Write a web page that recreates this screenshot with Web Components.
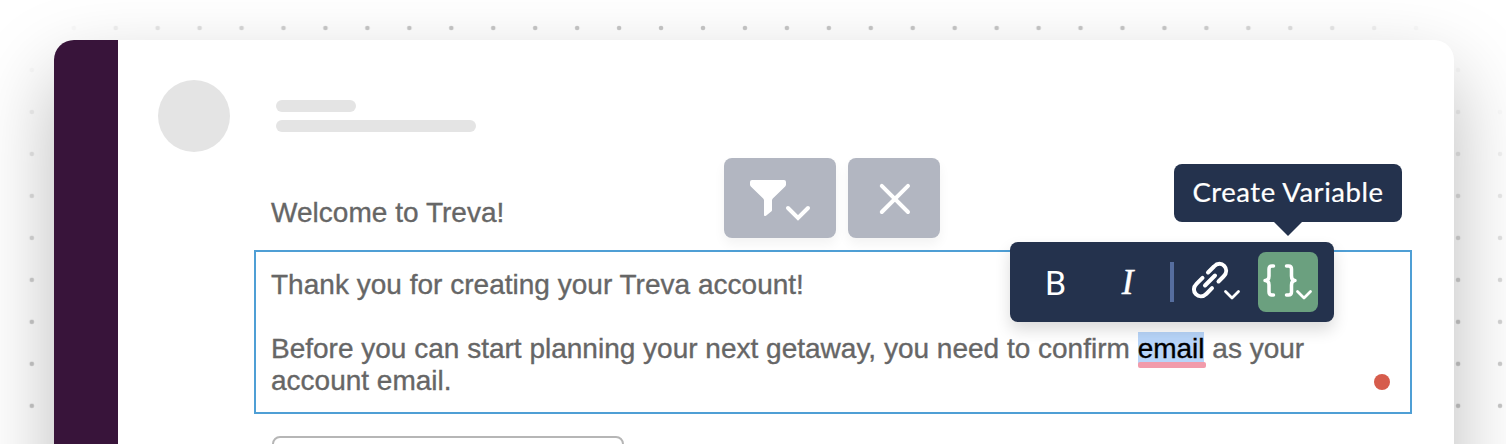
<!DOCTYPE html>
<html lang="en"><head><meta charset="utf-8"><title>Treva template editor</title>
<style>html,body{margin:0;height:444px;overflow:hidden;background:#fff}</style></head>
<body><template-editor></template-editor>
<script>
const define=(name,html)=>customElements.define(name,class extends HTMLElement{
 constructor(){super();const t=document.createElement('template');t.innerHTML=html;
 this.attachShadow({mode:'open'}).appendChild(t.content.cloneNode(true));}});

define('skeleton-header',`<style>
:host{display:flex;align-items:center;gap:46px;height:72px}
.avatar{width:72px;height:72px;border-radius:50%;background:#e4e4e4}
.lines{display:grid;gap:8px}
.lines i{display:block;height:12px;width:200px;border-radius:6px;background:#e4e4e4}
.lines i:first-child{width:80px}
</style><div class="avatar"></div><div class="lines"><i></i><i></i></div>`);

define('marked-word',`<style>
:host{position:relative;padding-top:1px;color:#000;background:linear-gradient(#b8d5f9,#b8d5f9) no-repeat 0 0/66px 100%}
:host::after{content:"";position:absolute;left:0;width:68px;top:30px;height:6px;border-radius:2px;background:#f29bab}
</style><slot></slot>`);

define('text-block',`<style>
:host{display:block;position:relative;box-sizing:border-box;height:164px;border:2px solid #4f9fd5;padding:17px 15px 15px}
.dot{position:absolute;right:20px;bottom:22px;width:16px;height:16px;border-radius:50%;background:#d65c4c}
</style><slot></slot><span class="dot"></span>`);

define('filter-actions',`<style>
:host{display:flex;gap:12px}
.b{box-sizing:border-box;height:80px;border-radius:8px;background:#b2b6c1;box-shadow:0 6px 12px rgba(0,0,0,.05)}
svg{display:block}
</style><div class="b"><svg width="112" height="80" viewBox="0 0 112 80"><path fill="#fff" d="M28 22h32q2 0 2 2v2.600q0 1-.8 1.800L48.800 40.500Q48 41.300 48 42.500V52q0 1-.8 1.600L42 57.700q-2 1-2-.7V42.500Q40 41.300 39.200 40.500L26.800 28.400Q26 27.600 26 26.600V24q0-2 2-2z"/><path d="M64 50l10 10 10-10" fill="none" stroke="#fff" stroke-width="4" stroke-linecap="round"/></svg></div>
<div class="b"><svg width="92" height="80" viewBox="0 0 92 80"><path d="M33.800 27.800L60 54M60 27.800L33.800 54" fill="none" stroke="#fff" stroke-width="4" stroke-linecap="round"/></svg></div>`);

define('tool-tip',`<style>
:host{display:flex;position:relative;width:228px;height:58px;align-items:center;justify-content:center;border-radius:8px;background:#24324d;color:#fff;font:27.500px/54px Lato,sans-serif;white-space:nowrap}
span{letter-spacing:.53px;-webkit-text-stroke:.2px #fff;height:56px}
:host::after{content:"";position:absolute;left:100px;top:58px;border:14px solid transparent;border-top-color:#24324d;border-bottom:0}
</style><span><slot></slot></span>`);

define('format-toolbar',`<style>
:host{display:flex;align-items:center;box-sizing:border-box;width:324px;height:80px;border-radius:8px;background:#24324d;color:#fff;box-shadow:0 8px 16px rgba(0,0,0,.14)}
.b{width:91px;text-align:center;font:34px/80px Roboto,sans-serif;margin-top:1px}
.i{width:53px;text-align:center;font:italic 35px/80px "Liberation Serif",serif;-webkit-text-stroke:.4px #fff;margin-top:1px}
.sep{width:4px;height:40px;margin-left:16px;background:#566e9f}
svg{display:block;flex:none}.link{margin-left:14px}
.var{width:60px;height:60px;border-radius:8px;background:#6ba07f;margin-left:10px}
path{fill:none;stroke:#fff;stroke-linecap:round;stroke-linejoin:round}
</style><div class="b">B</div><div class="i">I</div><div class="sep"></div>
<svg class="link" width="60" height="60" viewBox="0 0 60 60"><g transform="translate(-1188 -252)"><path stroke-width="4" d="M1208 272.500L1214 266.500C1221 259 1231 269 1223.500 276.500L1218.500 281.500M1202.500 277.800L1196.700 283.600C1189 291 1199 301 1206.500 293.700L1212 288.200M1205 285.500L1215 275.500"/><path stroke-width="2.800" d="M1225.500 291.500l6.500 6.500 6.500-6.500"/></g></svg>
<div class="var"><svg width="60" height="60" viewBox="0 0 60 60"><path stroke-width="3.500" d="M15.500 14H14Q11 14 11 17V24Q11 28.500 7 28.500Q11 28.500 11 33V40Q11 43 14 43H15.500M28.500 14H30.500Q33.500 14 33.500 17V24Q33.500 28.500 37 28.500Q33.500 28.500 33.500 33V40Q33.500 43 30.500 43H28.500"/><path stroke-width="2.800" d="M39.500 39.500l6.500 6.500 6.500-6.500"/></svg></div>`);

define('template-editor',`<style>
:host{display:block;position:relative;box-sizing:border-box;width:1506px;height:444px;padding:40px 52px 0 54px;overflow:hidden}
.dots{position:absolute;left:0;top:0;width:1506px;height:444px;-webkit-mask-image:radial-gradient(circle at 745px 750px,#000 830px,transparent 1005px);mask-image:radial-gradient(circle at 745px 750px,#000 830px,transparent 1005px)}
.card{position:relative;display:flex;height:1000px;border-radius:20px;background:#fff;box-shadow:0 34px 80px rgba(0,0,0,.27)}
.side{width:64px;border-radius:20px 0 0 0;background:#38143a}
main{flex:1;padding:40px 42px 0 40px;color:#666;font:28px/32px "Liberation Sans",Arial,sans-serif;-webkit-text-stroke:.35px}
.body{padding-left:96px}
p{margin:0;white-space:nowrap;letter-spacing:.015px}
.welcome{padding:45px 17px 21px;letter-spacing:.03px}
.gap{margin-top:32px;letter-spacing:.003px}
.next{box-sizing:border-box;margin:22px 0 0 18px;width:352px;height:80px;border:2px solid #b6b6b6;border-radius:8px}
.over{position:absolute}
</style><div class="card"><div class="side"></div><main><skeleton-header></skeleton-header>
<div class="body"><p class="welcome">Welcome to Treva!</p>
<text-block><p>Thank you for creating your Treva account!</p><p class="gap">Before you can start planning your next getaway, you need to confirm <marked-word>email</marked-word> as your<br>account email.</p></text-block>
<div class="next"></div></div></main></div>
<svg class="dots"><defs><pattern id="d" x="10.8" y="7" width="41.950" height="41.980" patternUnits="userSpaceOnUse"><circle cx="21" cy="21" r="2.300" fill="#000" fill-opacity=".22"/></pattern><clipPath id="c"><path d="M0 0H1506V444H1454V40H54V444H0z"/></clipPath></defs><rect width="1506" height="444" fill="url(#d)" clip-path="url(#c)"/></svg>
<filter-actions class="over" style="left:724px;top:158px"></filter-actions>
<format-toolbar class="over" style="left:1010px;top:242px"></format-toolbar>
<tool-tip class="over" style="left:1174px;top:164px">Create Variable</tool-tip>`);
</script></body></html>
